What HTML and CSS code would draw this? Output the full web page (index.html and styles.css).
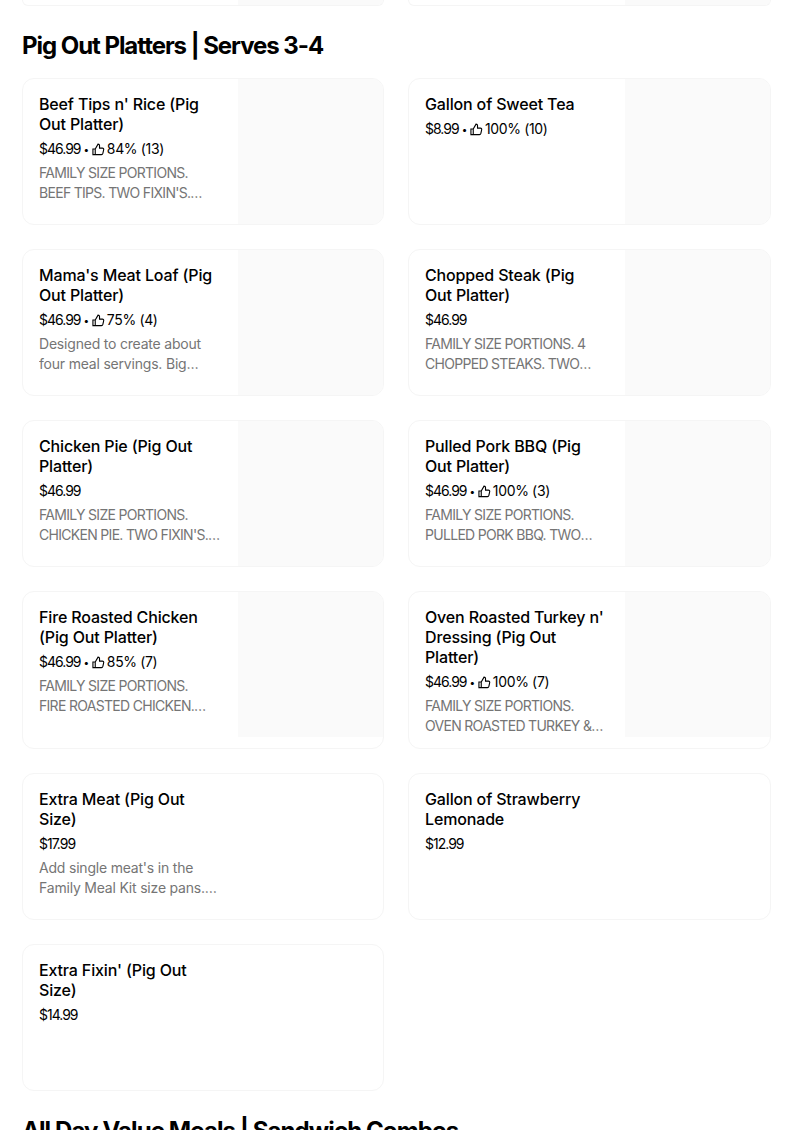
FILE: index.html
```html
<!DOCTYPE html>
<html lang="en">
<head>
    <meta charset="UTF-8">
    <meta name="viewport" content="width=device-width, initial-scale=1.0">
    <title>Menu</title>
    <link rel="stylesheet" href="styles.css">
</head>
<body>
    <svg class="defs" width="0" height="0">
        <symbol id="thumb" viewBox="0 0 14 14">
            <path d="M1 6.5h2.5v6H1zM3.5 6.5 6.5 1.2c1 0 1.6.7 1.6 1.6v2.7h3.2c.9 0 1.5.8 1.3 1.7l-.9 4c-.2.7-.7 1.3-1.5 1.3H3.5" fill="none" stroke="currentColor" stroke-width="1.2"/>
        </symbol>
    </svg>

    <div class="peek">
        <div class="peek-card"><div class="peek-img"></div></div>
        <div class="peek-card"><div class="peek-img"></div></div>
    </div>

    <h2 class="section-title">Pig Out Platters | Serves 3-4</h2>
    <div class="item-grid">
        <div class="card">
            <div class="info">
                <h3>Beef Tips n' Rice (Pig Out Platter)</h3>
                <div class="meta"><span class="price">$46.99</span><span class="dot">•</span><svg class="thumb"><use href="#thumb"/></svg><span>84% (13)</span></div>
                <p class="desc caps">FAMILY SIZE PORTIONS.<br>BEEF TIPS. TWO FIXIN'S. ROLLS AND DESSERT INCLUDED.</p>
            </div>
            <div class="thumb-img"></div>
        </div>
        <div class="card">
            <div class="info">
                <h3>Gallon of Sweet Tea</h3>
                <div class="meta"><span class="price">$8.99</span><span class="dot">•</span><svg class="thumb"><use href="#thumb"/></svg><span>100% (10)</span></div>
            </div>
            <div class="thumb-img"></div>
        </div>
        <div class="card">
            <div class="info">
                <h3>Mama's Meat Loaf (Pig Out Platter)</h3>
                <div class="meta"><span class="price">$46.99</span><span class="dot">•</span><svg class="thumb"><use href="#thumb"/></svg><span>75% (4)</span></div>
                <p class="desc">Designed to create about<br>four meal servings. Big portions of meat loaf and two fixin's.</p>
            </div>
            <div class="thumb-img"></div>
        </div>
        <div class="card">
            <div class="info">
                <h3>Chopped Steak (Pig Out Platter)</h3>
                <div class="meta"><span class="price">$46.99</span></div>
                <p class="desc caps">FAMILY SIZE PORTIONS. 4<br>CHOPPED STEAKS. TWO FIXIN'S. ROLLS AND DESSERT INCLUDED.</p>
            </div>
            <div class="thumb-img"></div>
        </div>
        <div class="card">
            <div class="info">
                <h3>Chicken Pie (Pig Out Platter)</h3>
                <div class="meta"><span class="price">$46.99</span></div>
                <p class="desc caps">FAMILY SIZE PORTIONS.<br>CHICKEN PIE. TWO FIXIN'S. ROLLS AND DESSERT INCLUDED.</p>
            </div>
            <div class="thumb-img"></div>
        </div>
        <div class="card">
            <div class="info">
                <h3>Pulled Pork BBQ (Pig Out Platter)</h3>
                <div class="meta"><span class="price">$46.99</span><span class="dot">•</span><svg class="thumb"><use href="#thumb"/></svg><span>100% (3)</span></div>
                <p class="desc caps">FAMILY SIZE PORTIONS.<br>PULLED PORK BBQ. TWO FIXIN'S. ROLLS AND DESSERT INCLUDED.</p>
            </div>
            <div class="thumb-img"></div>
        </div>
        <div class="card">
            <div class="info">
                <h3>Fire Roasted Chicken (Pig Out Platter)</h3>
                <div class="meta"><span class="price">$46.99</span><span class="dot">•</span><svg class="thumb"><use href="#thumb"/></svg><span>85% (7)</span></div>
                <p class="desc caps">FAMILY SIZE PORTIONS.<br>FIRE ROASTED CHICKEN. FIXIN'S AND ROLLS AND DESSERT INCLUDED.</p>
            </div>
            <div class="thumb-img"></div>
        </div>
        <div class="card">
            <div class="info">
                <h3>Oven Roasted Turkey n' Dressing (Pig Out Platter)</h3>
                <div class="meta"><span class="price">$46.99</span><span class="dot">•</span><svg class="thumb"><use href="#thumb"/></svg><span>100% (7)</span></div>
                <p class="desc caps">FAMILY SIZE PORTIONS.<br>OVEN ROASTED TURKEY &amp; DRESSING. TWO FIXIN'S. ROLLS AND DESSERT INCLUDED.</p>
            </div>
            <div class="thumb-img"></div>
        </div>
        <div class="card">
            <div class="info">
                <h3>Extra Meat (Pig Out Size)</h3>
                <div class="meta"><span class="price">$17.99</span></div>
                <p class="desc">Add single meat's in the<br>Family Meal Kit size pans. Feeds several people.</p>
            </div>
        </div>
        <div class="card">
            <div class="info">
                <h3>Gallon of Strawberry Lemonade</h3>
                <div class="meta"><span class="price">$12.99</span></div>
            </div>
        </div>
        <div class="card">
            <div class="info">
                <h3>Extra Fixin' (Pig Out Size)</h3>
                <div class="meta"><span class="price">$14.99</span></div>
            </div>
        </div>
    </div>

    <h2 class="section-title next">All Day Value Meals | Sandwich Combos</h2>
</body>
</html>
```

FILE: styles.css
```css
* {
    margin: 0;
    padding: 0;
    box-sizing: border-box;
}

html, body {
    height: 1130px;
    overflow: hidden;
}

body {
    font-family: Inter, "Liberation Sans", sans-serif;
    background-color: #fff;
    color: #000;
    padding: 0 0 0 22px;
}

.defs {
    display: block;
    height: 0;
}

.peek {
    display: grid;
    grid-template-columns: 362px 363px;
    column-gap: 24px;
    height: 6px;
}

.peek-card {
    border: 1px solid #f5f5f5;
    border-top: none;
    border-radius: 0 0 12px 12px;
    overflow: hidden;
    display: flex;
    justify-content: flex-end;
}

.peek-img {
    width: 145px;
    background: #fafafa;
}

.section-title {
    font-size: 24px;
    line-height: 32px;
    font-weight: 700;
    letter-spacing: -1.05px;
    margin-top: 24px;
    margin-bottom: 16px;
}

.section-title.next {
    margin-top: 24px;
    letter-spacing: -0.9px;
}

.item-grid {
    display: grid;
    grid-template-columns: 362px 363px;
    gap: 24px;
}

.card {
    display: flex;
    justify-content: space-between;
    align-items: flex-start;
    min-height: 147px;
    border: 1px solid #f5f5f5;
    border-radius: 12px;
    overflow: hidden;
}

.info {
    width: 208px;
    padding: 15px 0 12px 16px;
}

.info h3 {
    max-width: 180px;
    font-size: 16px;
    line-height: 20px;
    font-weight: 500;
    letter-spacing: -0.15px;
}

.meta {
    display: flex;
    align-items: center;
    font-size: 14px;
    line-height: 20px;
    margin-top: 5px;
    letter-spacing: -0.35px;
    white-space: nowrap;
}

.price {
    letter-spacing: -1px;
}

.dot {
    font-size: 10px;
    margin: 0 3px;
}

.thumb {
    width: 13px;
    height: 13px;
    margin-right: 2px;
}

.desc {
    font-size: 14px;
    line-height: 20px;
    color: #757575;
    margin-top: 4px;
    letter-spacing: -0.2px;
    display: -webkit-box;
    -webkit-box-orient: vertical;
    -webkit-line-clamp: 2;
    overflow: hidden;
}

.desc.caps {
    letter-spacing: -0.7px;
}

.thumb-img {
    width: 145px;
    height: 145px;
    background: #fafafa;
}
```
